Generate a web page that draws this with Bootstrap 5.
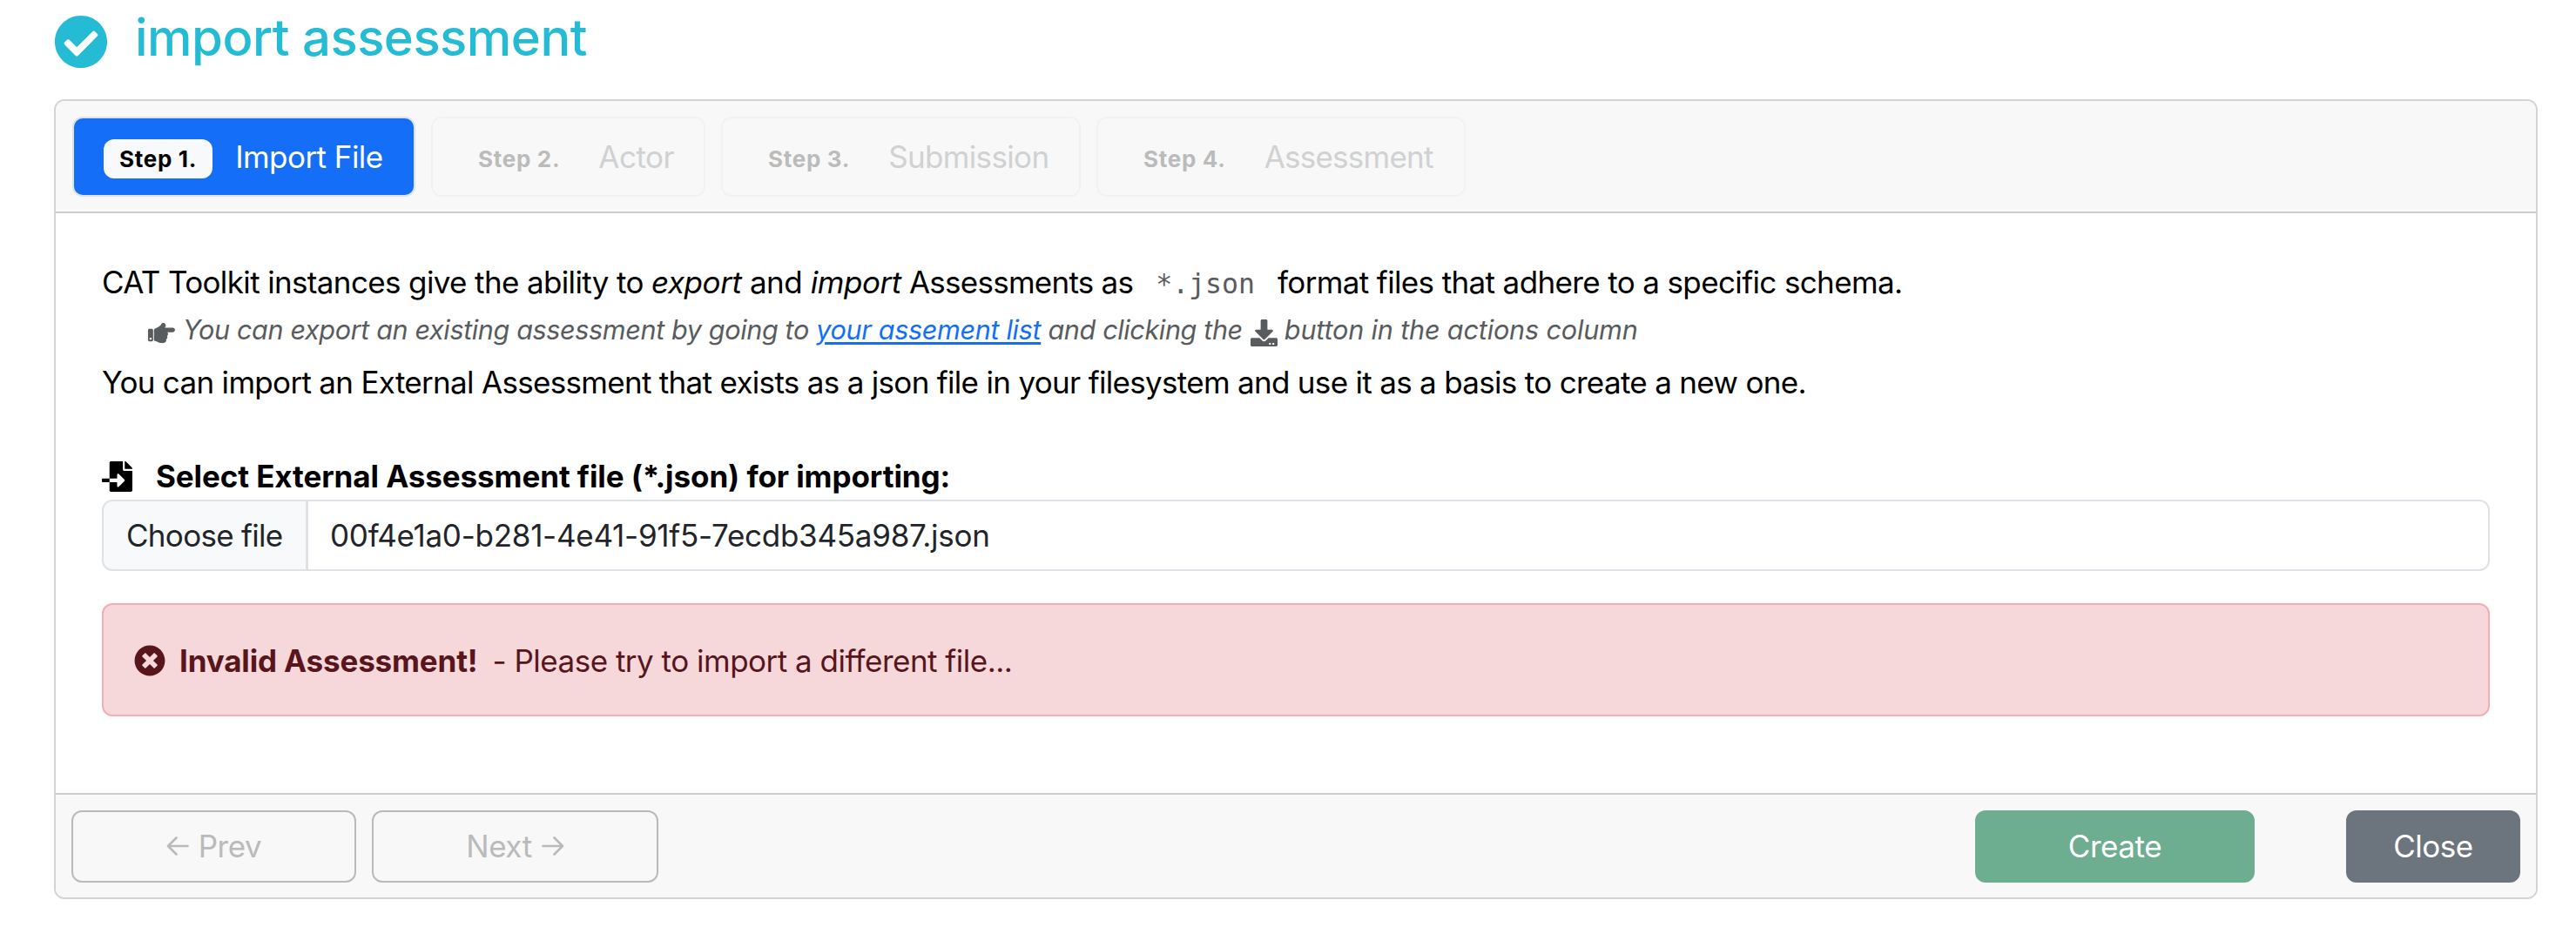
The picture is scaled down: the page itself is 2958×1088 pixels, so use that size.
<!DOCTYPE html>
<html lang="en">
<head>
<meta charset="utf-8">
<title>Import assessment</title>
<meta name="viewport" content="width=device-width, initial-scale=1">
<link href="https://cdn.jsdelivr.net/npm/bootstrap@5.3.0/dist/css/bootstrap.min.css" rel="stylesheet">
<style>
  body { font-family: Inter, "Liberation Sans", sans-serif; font-size: 35px; line-height: 54px; color: #000; overflow: hidden; }
  svg { fill: currentColor; flex: none; display: block; }
  .page-wrap { padding: 0 44px 0 62px; }
  .page-title { height: 114px; color: #25bbd5; }
  .page-title svg { width: 62px; height: 62px; margin-top: 17px; }
  .page-title h1 { font-size: 58px; font-weight: 500; line-height: 72px; letter-spacing: -.52px; margin: 7px 0 0 31px; white-space: nowrap; }

  .wizard { height: 919px; border: 2px solid #d2d3d3; border-radius: 12px; --bs-card-inner-border-radius: 10px; }
  .wizard .card-header { height: 129px; padding: 18px 19px; border-bottom: 2px solid #cbcccc; background: #f8f8f8; gap: 18px; }
  .wizard .card-body { padding: 52px 53px 0; white-space: nowrap; }
  .wizard .card-footer { height: 120px; padding: 18px; border-top: 2px solid #cbcccc; background: #f8f8f8; }

  .step-btn { height: 92px; border: 2px solid #f1f2f2; border-radius: 12px; padding: 0 0 1px 34px; color: #d0d1d2; gap: 26px; white-space: nowrap; }
  .step-btn.on { background: #146ef8; border-color: #dee2e6; color: #fff; }
  .step-no { font-size: 26px; font-weight: 700; line-height: 46px; height: 45px; letter-spacing: .7px; padding: 0 18px; border-radius: 12px; color: #bbb; margin-top: 5px; }
  .on .step-no { background: #f8f9fa; color: #000; }
  .w-s1 { width: 394px; letter-spacing: -.55px; }
  .w-s2 { width: 315px; letter-spacing: -.5px; }
  .w-s3 { width: 413px; letter-spacing: -.65px; }
  .w-s4 { width: 424px; letter-spacing: -.76px; }

  .ls-intro { letter-spacing: -.636px; }
  .ls-verbs { letter-spacing: -.45px; }
  .ls-as { letter-spacing: -.75px; }
  .ls-format { letter-spacing: -.63px; }
  .ls-basis { letter-spacing: -.69px; }
  .fmt { font-family: "DejaVu Sans Mono", monospace; font-size: 31.5px; line-height: 1; color: #595c5f; margin: 0 26px; }
  .hint { font-size: 30.6px; line-height: 55px; height: 61px; padding-left: 53px; color: #595c5f; font-style: italic; letter-spacing: -.38px; }
  .hint svg { display: inline-block; width: 31px; height: 31px; vertical-align: -8px; }
  .hint a { color: #146ef8; letter-spacing: -.33px; text-decoration-thickness: 3px; text-underline-offset: 3px; }
  .hand { margin-right: 9px; }
  .dl { margin: 0 8px 0 9px; }
  .ls-button { letter-spacing: -.17px; }

  .file-label { margin-top: 54px; font-weight: 700; letter-spacing: -.09px; gap: 27px; }
  .file-label svg { width: 35px; height: 35px; }
  .file-group { height: 82px; }
  .file-group .input-group-text, .file-group .form-control { font-size: 35px; line-height: 54px; border: 2px solid #dee2e6; border-radius: 12px; padding: 12px 26px; color: #212529; }
  .file-group .input-group-text { background: #f8f9fa; width: 236px; letter-spacing: -.7px; }
  .file-group .form-control { letter-spacing: -.26px; padding-left: 25px; }
  .bad-file { height: 130px; margin: 37px 0 0; padding: 1px 35px 0; border: 2px solid #f1aeb5; border-radius: 12px; background: #f6d8da; color: #58151c; letter-spacing: -.5px; }
  .bad-file svg { width: 36px; height: 36px; }
  .bad-file b { letter-spacing: -.16px; margin: 0 17px 0 16px; }

  .foot-btn { height: 83px; padding: 0 0 1px; font-size: 35px; line-height: 54px; letter-spacing: -.45px; border-radius: 12px; border: 2px solid; }
  .foot-btn.ghost { border-color: #b9bbbb; color: #b9bbbb; gap: 11px; }
  .foot-btn.ghost svg { width: 26px; height: 26px; fill: none; stroke: currentColor; stroke-width: 2.7; stroke-linecap: round; stroke-linejoin: round; }
  .w-prev { width: 327px; }
  .w-next { width: 329px; margin-left: 18px; }
  .w-create { width: 321px; background: #6dad90; border-color: #6dad90; color: #fff; }
  .w-close { width: 200px; margin-left: 105px; background: #6c757d; border-color: #6c757d; color: #fff; }
</style>
<script src="https://cdn.jsdelivr.net/npm/bootstrap@5.3.0/dist/js/bootstrap.bundle.min.js"></script>
</head>
<body>
<main class="page-wrap">
  <div class="page-title d-flex">
    <svg viewBox="0 0 512 512"><path d="M504 256c0 136.967-111.033 248-248 248S8 392.967 8 256 119.033 8 256 8s248 111.033 248 248zM227.314 387.314l184-184c6.248-6.248 6.248-16.379 0-22.627l-22.627-22.627c-6.248-6.249-16.379-6.249-22.628 0L216 308.118l-70.059-70.059c-6.248-6.248-16.379-6.248-22.628 0l-22.627 22.627c-6.248 6.248-6.248 16.379 0 22.627l104 104c6.249 6.249 16.379 6.249 22.628.001z"/></svg>
    <h1>import assessment</h1>
  </div>
  <div class="card wizard">
    <div class="card-header d-flex">
      <div class="step-btn on w-s1 d-flex align-items-center"><span class="step-no">Step 1.</span><span>Import File</span></div>
      <div class="step-btn w-s2 d-flex align-items-center"><span class="step-no">Step 2.</span><span>Actor</span></div>
      <div class="step-btn w-s3 d-flex align-items-center"><span class="step-no">Step 3.</span><span>Submission</span></div>
      <div class="step-btn w-s4 d-flex align-items-center"><span class="step-no">Step 4.</span><span>Assessment</span></div>
    </div>
    <div class="card-body">
      <div><span class="ls-intro">CAT Toolkit instances give the ability to </span><span class="ls-verbs"><em>export</em> and <em>import</em></span><span class="ls-as"> Assessments as</span><code class="fmt">*.json</code><span class="ls-format">format files that adhere to a specific schema.</span></div>
      <div class="hint"><svg class="hand" viewBox="0 0 512 512"><path d="M512 199.652c0 23.625-20.65 43.826-44.8 43.826h-99.851c16.34 17.048 18.346 49.766-6.299 70.944 14.288 22.829 2.147 53.017-16.45 62.315C353.574 425.878 322.654 448 272 448c-2.746 0-13.276-.203-16-.195-61.971.168-76.894-31.065-123.731-38.315C120.596 407.683 112 397.599 112 385.786V214.261l.002-.001c.011-18.366 10.607-35.889 28.464-43.845 28.886-12.994 95.413-49.038 107.534-77.323 7.797-18.194 21.384-29.084 40-29.092 34.222-.014 57.752 35.098 44.119 66.908-3.583 8.359-8.312 16.67-14.153 24.918H467.2c23.45 0 44.8 20.543 44.8 43.826zM96 200v192c0 13.255-10.745 24-24 24H24c-13.255 0-24-10.745-24-24V200c0-13.255 10.745-24 24-24h48c13.255 0 24 10.745 24 24zM68 368c0-11.046-8.954-20-20-20s-20 8.954-20 20 8.954 20 20 20 20-8.954 20-20z"/></svg>You can export an existing assessment by going to <a href="#">your assement list</a> and clicking the<svg class="dl" viewBox="0 0 512 512"><path d="M216 0h80c13.3 0 24 10.7 24 24v168h87.7c17.8 0 26.7 21.5 14.1 34.1L269.7 378.3c-7.5 7.5-19.8 7.5-27.3 0L90.1 226.1c-12.6-12.6-3.7-34.1 14.1-34.1H192V24c0-13.3 10.7-24 24-24zm296 376v112c0 13.3-10.7 24-24 24H24c-13.3 0-24-10.7-24-24V376c0-13.3 10.7-24 24-24h146.7l49 49c20.1 20.1 52.5 20.1 72.6 0l49-49H488c13.3 0 24 10.7 24 24zm-124 88c0-11-9-20-20-20s-20 9-20 20 9 20 20 20 20-9 20-20zm64 0c0-11-9-20-20-20s-20 9-20 20 9 20 20 20 20-9 20-20z"/></svg><span class="ls-button">button in the actions column</span></div>
      <div class="ls-basis">You can import an External Assessment that exists as a json file in your filesystem and use it as a basis to create a new one.</div>
      <div class="file-label d-flex align-items-center"><svg viewBox="0 0 512 512"><path d="M16 288c-8.8 0-16 7.2-16 16v32c0 8.8 7.2 16 16 16h112v-64zm489-183L407.1 7c-4.5-4.5-10.6-7-17-7H384v128h128v-6.1c0-6.3-2.5-12.4-7-16.9zm-153 31V0H152c-13.3 0-24 10.7-24 24v264h128v-65.2c0-14.3 17.3-21.4 27.4-11.3L379 308c6.6 6.7 6.6 17.4 0 24l-95.7 96.4c-10.1 10.1-27.4 3-27.4-11.3V352H128v136c0 13.3 10.7 24 24 24h336c13.3 0 24-10.7 24-24V160H376c-13.2 0-24-10.8-24-24z"/></svg><span>Select External Assessment file (*.json) for importing:</span></div>
      <div class="input-group file-group"><span class="input-group-text">Choose file</span><div class="form-control">00f4e1a0-b281-4e41-91f5-7ecdb345a987.json</div></div>
      <div class="alert bad-file d-flex align-items-center"><svg viewBox="0 0 512 512"><path d="M256 8C119 8 8 119 8 256s111 248 248 248 248-111 248-248S393 8 256 8zm121.600 313.100c4.700 4.700 4.700 12.300 0 17L338 377.600c-4.700 4.700-12.300 4.700-17 0L256 312l-65.100 65.600c-4.700 4.700-12.300 4.700-17 0L134.400 338c-4.700-4.700-4.700-12.300 0-17l65.600-65-65.600-65.100c-4.700-4.700-4.700-12.300 0-17l39.600-39.600c4.700-4.700 12.300-4.700 17 0l65 65.700 65.100-65.600c4.700-4.700 12.300-4.700 17 0l39.600 39.600c4.700 4.700 4.700 12.300 0 17L312 256l65.600 65.100z"/></svg><b>Invalid Assessment!</b><span>- Please try to import a different file...</span></div>
    </div>
    <div class="card-footer d-flex">
      <div class="btn foot-btn ghost w-prev d-flex align-items-center justify-content-center"><svg viewBox="0 0 26 26"><path d="M24.500 13H2M11.500 3.500L2 13l9.500 9.500"/></svg><span>Prev</span></div>
      <div class="btn foot-btn ghost w-next d-flex align-items-center justify-content-center"><span>Next</span><svg viewBox="0 0 26 26"><path d="M1.500 13H24M14.500 3.500L24 13l-9.500 9.500"/></svg></div>
      <div class="btn foot-btn w-create d-flex align-items-center justify-content-center ms-auto">Create</div>
      <div class="btn foot-btn w-close d-flex align-items-center justify-content-center">Close</div>
    </div>
  </div>
</main>
</body>
</html>
